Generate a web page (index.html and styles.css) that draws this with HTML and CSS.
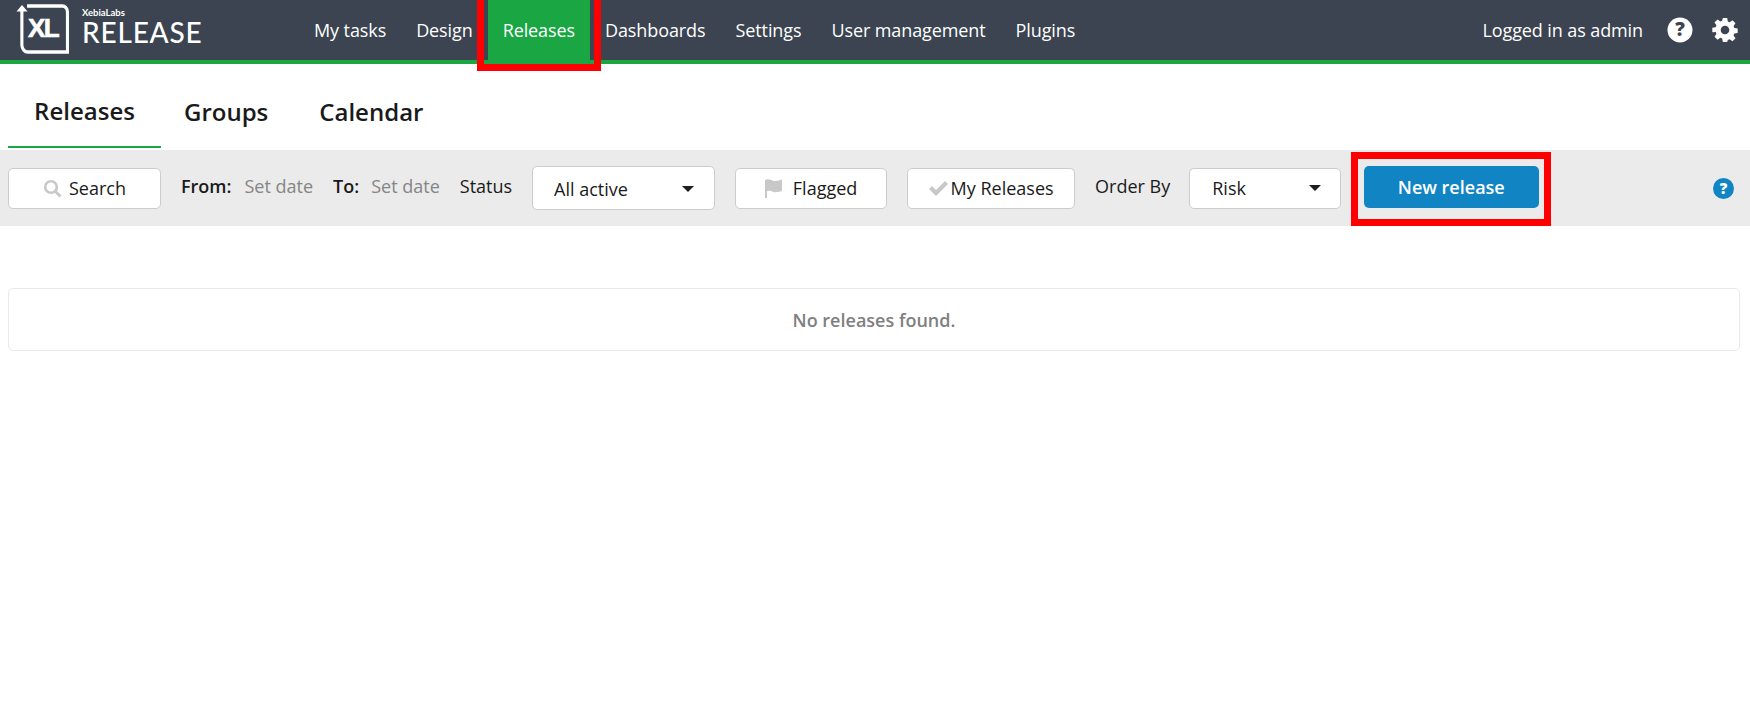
FILE: index.html
```html
<!DOCTYPE html>
<html lang="en">
<head>
<meta charset="utf-8">
<title>XL Release</title>
<link rel="stylesheet" href="styles.css">
</head>
<body>
<header class="topbar">
  <div class="brand">
    <div class="logo-mark">
      <svg width="56" height="56" viewBox="0 0 56 56" fill="none">
        <path d="M8 7V45a7 7 0 0 0 7 7H61V12a6 6 0 0 0-6-6H14" transform="translate(-0 0) scale(.86 1)" stroke="#fff" stroke-width="3.6"/>
        <path d="M1.500 11.500L7 5l5.500 6.500z" fill="#fff"/>
      </svg>
      <span class="logo-xl">XL</span>
    </div>
    <div class="brand-text">
      <span class="brand-small">XebiaLabs</span>
      <span class="brand-name">RELEASE</span>
    </div>
  </div>
  <nav class="mainnav">
    <a class="nav-item">My tasks</a>
    <a class="nav-item">Design</a>
    <a class="nav-item active">Releases</a>
    <a class="nav-item">Dashboards</a>
    <a class="nav-item">Settings</a>
    <a class="nav-item">User management</a>
    <a class="nav-item">Plugins</a>
  </nav>
  <div class="userbox">
    <span class="user">Logged in as admin</span>
    <svg class="help-top" width="26" height="26" viewBox="0 0 26 26">
      <circle cx="13" cy="13" r="12.500" fill="#fff"/>
      <text x="13" y="19" text-anchor="middle" class="q-mark q-dark">?</text>
    </svg>
    <svg class="gear" width="26" height="26" viewBox="0 0 24 24">
      <path fill="#fff" fill-rule="evenodd" d="M10 1h4l.6 3.100 1.700.7 2.600-1.800 2.800 2.800-1.800 2.600.7 1.700 3.100.6v4l-3.100.6-.7 1.700 1.800 2.600-2.800 2.800-2.600-1.800-1.700.7L14 23h-4l-.6-3.100-1.700-.7-2.600 1.800-2.800-2.800 1.800-2.600-.7-1.700L.3 14v-4l3.100-.6.700-1.700L2.300 5.100l2.800-2.800 2.600 1.800 1.700-.7zM12 8a4 4 0 1 0 0 8 4 4 0 0 0 0-8z"/>
    </svg>
  </div>
</header>

<div class="tabs">
  <a class="tab selected">Releases</a>
  <a class="tab">Groups</a>
  <a class="tab">Calendar</a>
</div>

<div class="toolbar">
  <button class="btn btn-search">
    <svg width="19" height="19" viewBox="0 0 19 19" fill="none"><circle cx="8" cy="8" r="5.800" stroke="#c8c8c8" stroke-width="2.600"/><path d="M12.500 12.500L17.500 17.500" stroke="#c8c8c8" stroke-width="3"/></svg>
    <span>Search</span>
  </button>
  <div class="date date-from"><b>From:</b><span class="set">Set date</span></div>
  <div class="date date-to"><b>To:</b><span class="set">Set date</span></div>
  <span class="label label-status">Status</span>
  <div class="select select-status"><span>All active</span><i class="caret"></i></div>
  <button class="btn btn-flag">
    <svg width="18" height="19" viewBox="0 0 18 19"><path fill="#c8c8c8" d="M0 1c4-2 7 1 9 1s5-.5 8-1.500V12c-3 1-6 1.500-8 1s-4-2-7-.8V19H0z"/></svg>
    <span>Flagged</span>
  </button>
  <button class="btn btn-mine">
    <svg width="19" height="15" viewBox="0 0 19 15"><path fill="#c8c8c8" d="M0 8l3-3 4 4 9-9 3 3L7 15z"/></svg>
    <span>My Releases</span>
  </button>
  <span class="label label-order">Order By</span>
  <div class="select select-risk"><span>Risk</span><i class="caret"></i></div>
  <div class="highlight-wrap">
    <button class="btn-primary">New release</button>
  </div>
  <svg class="help-blue" width="21" height="21" viewBox="0 0 21 21">
    <circle cx="10.500" cy="10.500" r="10.500" fill="#1184c3"/>
    <text x="10.500" y="15.500" text-anchor="middle" class="q-mark q-white">?</text>
  </svg>
</div>

<main class="content">
  <div class="empty">No releases found.</div>
</main>
</body>
</html>
```
FILE: styles.css
```css
* { box-sizing: border-box; }
html, body { margin: 0; padding: 0; }
body {
  background: #fff;
  color: #1a1a1a;
  font-family: "Open Sans", "Liberation Sans", sans-serif;
  font-size: 18px;
  min-height: 710px;
}
.topbar {
  display: flex;
  align-items: stretch;
  height: 64px;
  background: #3b4450;
  border-bottom: 4px solid #1aa643;
  color: #fff;
}
.brand {
  display: flex;
  align-items: flex-start;
  width: 299px;
  padding-left: 15px;
  flex: none;
}
.logo-mark {
  position: relative;
  width: 56px;
  height: 56px;
  margin-right: 11px;
  flex: none;
}
.logo-mark svg { display: block; }
.logo-xl {
  position: absolute;
  left: 13px;
  top: 15px;
  font-family: "Liberation Sans", sans-serif;
  font-weight: 700;
  font-size: 26px;
  line-height: 26px;
  letter-spacing: -1.500px;
  -webkit-text-stroke: .6px #fff;
}
.brand-text { display: flex; flex-direction: column; padding-top: 7px; }
.brand-small {
  font-family: "Lato", sans-serif;
  font-weight: 700;
  font-size: 9.500px;
  line-height: 11px;
}
.brand-name {
  font-family: "Lato", sans-serif;
  font-weight: 500;
  font-size: 28px;
  line-height: 28px;
  letter-spacing: .8px;
}
.mainnav { display: flex; align-items: stretch; }
.nav-item {
  display: flex;
  align-items: center;
  height: 60px;
  padding: 0 15px;
  font-size: 18px;
  white-space: nowrap;
  letter-spacing: -.1px;
}
.nav-item.active {
  position: relative;
  background: #1aa643;
}
.nav-item.active::after {
  content: "";
  position: absolute;
  left: -11px;
  right: -11px;
  top: -7px;
  bottom: -11px;
  border: 7px solid #fe0000;
  pointer-events: none;
}
.userbox {
  display: flex;
  align-items: center;
  margin-left: auto;
  padding-right: 12px;
}
.user { font-size: 18px; letter-spacing: -.1px; margin-right: 24px; }
.help-top { margin-right: 19px; }
.q-mark { font-family: "Open Sans", sans-serif; font-weight: 800; }
.q-dark { fill: #3b4450; font-size: 19px; }
.q-white { fill: #fff; font-size: 15px; }
.tabs {
  display: flex;
  padding: 0 0 0 8px;
  height: 86px;
}
.tab {
  display: flex;
  align-items: center;
  justify-content: center;
  height: 84px;
  padding-top: 10px;
  font-size: 24px;
  font-weight: 600;
  white-space: nowrap;
}
.tab.selected { width: 153px; border-bottom: 2px solid #1aa643; }
.tab:nth-child(2) { margin-left: 23px; }
.tab:nth-child(3) { margin-left: 51px; }
.toolbar {
  display: flex;
  align-items: center;
  height: 76px;
  background: #ebebeb;
  padding: 0 16px 0 8px;
  position: relative;
}
.btn {
  display: flex;
  align-items: center;
  justify-content: center;
  height: 41px;
  background: #fff;
  border: 1px solid #ccc;
  border-radius: 5px;
  padding: 0;
  font: inherit;
  font-size: 18px;
  color: #1a1a1a;
}
.btn-search { width: 153px; gap: 7px; }
.btn-flag { width: 152px; margin-left: 20px; gap: 10px; }
.btn-mine { width: 168px; margin-left: 20px; gap: 3px; }
.date { display: flex; font-size: 18px; margin-bottom: 5px; white-space: nowrap; }
.date b { font-weight: 600; }
.set { color: #858585; }
.date-from { margin-left: 20px; }
.date-from .set { margin-left: 13px; }
.date-to { margin-left: 20px; }
.date-to .set { margin-left: 12px; }
.label { margin-bottom: 5px; white-space: nowrap; }
.label-status { margin-left: 20px; }
.label-order { margin-left: 20px; }
.select {
  display: flex;
  align-items: center;
  justify-content: space-between;
  background: #fff;
  border: 1px solid #ccc;
  border-radius: 5px;
  white-space: nowrap;
}
.select-status { width: 183px; height: 44px; margin-left: 20px; padding: 2px 20px 0 21px; }
.select-risk { width: 152px; height: 41px; margin-left: 19px; padding: 0 19px 0 22px; }
.caret {
  width: 0;
  height: 0;
  border-left: 6px solid transparent;
  border-right: 6px solid transparent;
  border-top: 6px solid #1e1e1e;
}
.highlight-wrap {
  display: flex;
  align-items: center;
  justify-content: center;
  width: 200px;
  height: 74px;
  margin: 2px 0 0 10px;
  border: 7px solid #fe0000;
}
.btn-primary {
  width: 175px;
  height: 42px;
  margin-top: -4px;
  background: #1184c3;
  color: #fff;
  border: 0;
  border-radius: 5px;
  font: inherit;
  font-size: 18px;
  font-weight: 600;
}
.help-blue { margin-left: auto; }
.content { padding: 62px 10px 0 8px; }
.empty {
  display: flex;
  align-items: center;
  justify-content: center;
  height: 63px;
  border: 1px solid #e9e9e9;
  border-radius: 5px;
  color: #808080;
  font-weight: 600;
}
```
